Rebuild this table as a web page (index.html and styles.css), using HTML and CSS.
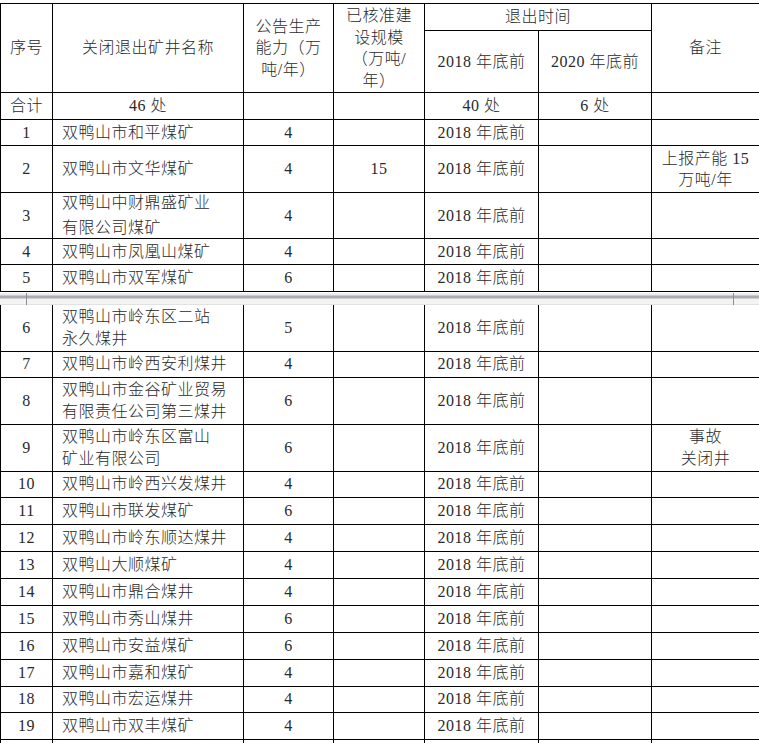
FILE: index.html
```html
<!DOCTYPE html>
<html lang="zh-CN">
<head>
<meta charset="utf-8">
<title>关闭退出矿井名单</title>
<link rel="stylesheet" href="styles.css">
</head>
<body>
<div class="page">
  <table class="grid">
    <colgroup>
      <col class="c1"><col class="c2"><col class="c3"><col class="c4"><col class="c5"><col class="c6"><col class="c7">
    </colgroup>
    <tr class="head-a">
      <th rowspan="2">序号</th>
      <th rowspan="2">关闭退出矿井名称</th>
      <th rowspan="2"><div class="hd">公告生产<br>能力（万<br>吨/年）</div></th>
      <th rowspan="2"><div class="hd">已核准建<br>设规模<br>（万吨/<br>年）</div></th>
      <th colspan="2">退出时间</th>
      <th rowspan="2">备注</th>
    </tr>
    <tr class="head-b">
      <th>2018 年底前</th>
      <th>2020 年底前</th>
    </tr>
    <tr class="h27">
      <td>合计</td><td>46 处</td><td></td><td></td><td>40 处</td><td>6 处</td><td></td>
    </tr>
    <tr class="h26">
      <td>1</td><td class="name">双鸭山市和平煤矿</td><td>4</td><td></td><td>2018 年底前</td><td></td><td></td>
    </tr>
    <tr class="h47">
      <td>2</td><td class="name">双鸭山市文华煤矿</td><td>4</td><td>15</td><td>2018 年底前</td><td></td><td>上报产能 15<br>万吨/年</td>
    </tr>
    <tr class="h46">
      <td>3</td><td class="name"><div class="wide">双鸭山中财鼎盛矿业<br>有限公司煤矿</div></td><td>4</td><td></td><td>2018 年底前</td><td></td><td></td>
    </tr>
    <tr class="h26">
      <td>4</td><td class="name">双鸭山市凤凰山煤矿</td><td>4</td><td></td><td>2018 年底前</td><td></td><td></td>
    </tr>
    <tr class="h27">
      <td>5</td><td class="name">双鸭山市双军煤矿</td><td>6</td><td></td><td>2018 年底前</td><td></td><td></td>
    </tr>
  </table>

  <div class="pagebreak"><span class="mark mark-l"></span><span class="mark mark-r"></span></div>

  <table class="grid cont">
    <colgroup>
      <col class="c1"><col class="c2"><col class="c3"><col class="c4"><col class="c5"><col class="c6"><col class="c7">
    </colgroup>
    <tr class="h46">
      <td>6</td><td class="name">双鸭山市岭东区二站<br>永久煤井</td><td>5</td><td></td><td>2018 年底前</td><td></td><td></td>
    </tr>
    <tr class="h26">
      <td>7</td><td class="name">双鸭山市岭西安利煤井</td><td>4</td><td></td><td>2018 年底前</td><td></td><td></td>
    </tr>
    <tr class="h47">
      <td>8</td><td class="name">双鸭山市金谷矿业贸易<br>有限责任公司第三煤井</td><td>6</td><td></td><td>2018 年底前</td><td></td><td></td>
    </tr>
    <tr class="h47">
      <td>9</td><td class="name">双鸭山市岭东区富山<br>矿业有限公司</td><td>6</td><td></td><td>2018 年底前</td><td></td><td>事故<br>关闭井</td>
    </tr>
    <tr class="h26">
      <td>10</td><td class="name">双鸭山市岭西兴发煤井</td><td>4</td><td></td><td>2018 年底前</td><td></td><td></td>
    </tr>
    <tr class="h27">
      <td>11</td><td class="name">双鸭山市联发煤矿</td><td>6</td><td></td><td>2018 年底前</td><td></td><td></td>
    </tr>
    <tr class="h27">
      <td>12</td><td class="name">双鸭山市岭东顺达煤井</td><td>4</td><td></td><td>2018 年底前</td><td></td><td></td>
    </tr>
    <tr class="h27">
      <td>13</td><td class="name">双鸭山大顺煤矿</td><td>4</td><td></td><td>2018 年底前</td><td></td><td></td>
    </tr>
    <tr class="h27">
      <td>14</td><td class="name">双鸭山市鼎合煤井</td><td>4</td><td></td><td>2018 年底前</td><td></td><td></td>
    </tr>
    <tr class="h27">
      <td>15</td><td class="name">双鸭山市秀山煤井</td><td>6</td><td></td><td>2018 年底前</td><td></td><td></td>
    </tr>
    <tr class="h27">
      <td>16</td><td class="name">双鸭山市安益煤矿</td><td>6</td><td></td><td>2018 年底前</td><td></td><td></td>
    </tr>
    <tr class="h27">
      <td>17</td><td class="name">双鸭山市嘉和煤矿</td><td>4</td><td></td><td>2018 年底前</td><td></td><td></td>
    </tr>
    <tr class="h26">
      <td>18</td><td class="name">双鸭山市宏运煤井</td><td>4</td><td></td><td>2018 年底前</td><td></td><td></td>
    </tr>
    <tr class="h27">
      <td>19</td><td class="name">双鸭山市双丰煤矿</td><td>4</td><td></td><td>2018 年底前</td><td></td><td></td>
    </tr>
    <tr class="h27">
      <td></td><td class="name"></td><td></td><td></td><td></td><td></td><td></td>
    </tr>
  </table>
</div>
</body>
</html>
```

FILE: styles.css
```css
* {
  box-sizing: border-box;
}

html,
body {
  margin: 0;
  padding: 0;
  background: #ffffff;
  overflow: hidden;
}

body {
  height: 743px;
  font-family: "Liberation Serif", "Noto Sans CJK SC", serif;
  font-size: 16px;
  font-weight: 300;
  color: #2a2a2a;
}

.page {
  padding-top: 3px;
}

.grid {
  border-collapse: collapse;
  table-layout: fixed;
  width: 759px;
}

.c1 { width: 52px; }
.c2 { width: 191px; }
.c3 { width: 90px; }
.c4 { width: 91px; }
.c5 { width: 114px; }
.c6 { width: 113px; }
.c7 { width: 108px; }

.grid th,
.grid td {
  border: 1px solid #000000;
  padding: 0;
  text-align: center;
  vertical-align: middle;
  font-weight: 300;
  line-height: 21.5px;
  letter-spacing: 0.5px;
  white-space: nowrap;
}

.grid td.name {
  text-align: left;
  padding-left: 9px;
}

.head-a { height: 27px; }
.head-b { height: 62px; }

.grid tr.h26 { height: 26px; }
.grid tr.h27 { height: 27px; }
.grid tr.h46 { height: 46px; }
.grid tr.h47 { height: 47px; }

.hd {
  line-height: 21.5px;
}

.wide {
  line-height: 25px;
  margin: -3px 0 -2px;
}

.cont tr:first-child td {
  border-top: none;
}

.pagebreak {
  position: relative;
  height: 13px;
  background: linear-gradient(to bottom,
    #ffffff 0, #ffffff 1px,
    #ededf0 1px, #ededf0 3px,
    #c9c9cf 3px, #c9c9cf 4px,
    #ababb3 4px, #ababb3 6px,
    #cfcfd6 6px, #cfcfd6 7px,
    #f3f3f4 7px, #f3f3f4 12px,
    #e2e2e4 12px, #e2e2e4 13px);
}

.mark {
  position: absolute;
  top: 1px;
  width: 1px;
  height: 12px;
  background: #8e8e94;
}

.mark-l { left: 26px; }
.mark-r { left: 733px; }
```
